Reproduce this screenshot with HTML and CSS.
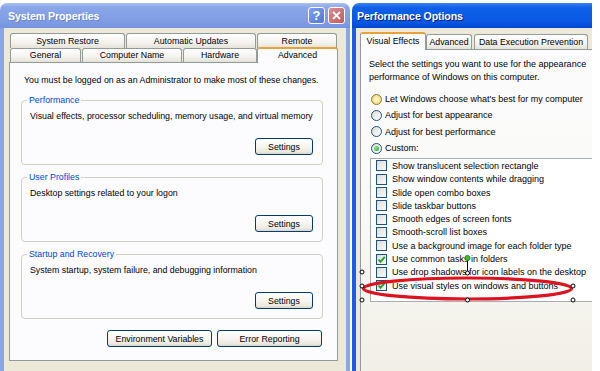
FILE: index.html
```html
<!DOCTYPE html>
<html lang="en">
<head>
    <meta charset="UTF-8">
    <title>System Properties / Performance Options</title>
    <link rel="stylesheet" href="styles.css">
</head>
<body>
    <div class="desktop">
        <!-- System Properties (inactive) -->
        <div class="window inactive sysprops">
            <div class="titlebar">
                <span class="title">System Properties</span>
                <div class="caption-buttons">
                    <span class="cbtn help">?</span>
                    <span class="cbtn close">
                        <svg width="9" height="9" viewBox="0 0 9 9"><path d="M1 1 L8 8 M8 1 L1 8" stroke="#fff" stroke-width="1.8" fill="none"/></svg>
                    </span>
                </div>
            </div>
            <div class="client">
                <div class="tab-row back">
                    <div class="tab t-restore">System Restore</div>
                    <div class="tab t-updates">Automatic Updates</div>
                    <div class="tab t-remote">Remote</div>
                </div>
                <div class="tab-row front">
                    <div class="tab t-general">General</div>
                    <div class="tab t-computer">Computer Name</div>
                    <div class="tab t-hardware">Hardware</div>
                    <div class="tab t-advanced selected">Advanced</div>
                </div>
                <div class="tab-panel">
                    <p class="notice">You must be logged on as an Administrator to make most of these changes.</p>

                    <fieldset class="group">
                        <legend>Performance</legend>
                        <p>Visual effects, processor scheduling, memory usage, and virtual memory</p>
                        <div class="group-actions"><button class="btn btn-settings">Settings</button></div>
                    </fieldset>

                    <fieldset class="group">
                        <legend>User Profiles</legend>
                        <p>Desktop settings related to your logon</p>
                        <div class="group-actions"><button class="btn btn-settings">Settings</button></div>
                    </fieldset>

                    <fieldset class="group">
                        <legend>Startup and Recovery</legend>
                        <p>System startup, system failure, and debugging information</p>
                        <div class="group-actions"><button class="btn btn-settings">Settings</button></div>
                    </fieldset>

                    <div class="panel-actions">
                        <button class="btn btn-wide">Environment Variables</button>
                        <button class="btn btn-wide">Error Reporting</button>
                    </div>
                </div>
            </div>
        </div>

        <!-- Performance Options (active) -->
        <div class="window active perfopts">
            <div class="titlebar">
                <span class="title">Performance Options</span>
            </div>
            <div class="client">
                <div class="tab-row">
                    <div class="tab t-visual selected">Visual Effects</div>
                    <div class="tab t-adv2">Advanced</div>
                    <div class="tab t-dep">Data Execution Prevention</div>
                </div>
                <div class="tab-panel fx-panel">
                    <p class="intro">Select the settings you want to use for the appearance<br>performance of Windows on this computer.</p>

                    <div class="radios">
                        <div class="radio-row"><span class="radio hover"></span>Let Windows choose what's best for my computer</div>
                        <div class="radio-row"><span class="radio"></span>Adjust for best appearance</div>
                        <div class="radio-row"><span class="radio"></span>Adjust for best performance</div>
                        <div class="radio-row"><span class="radio on"></span>Custom:</div>
                    </div>

                    <div class="listbox">
                        <div class="check-row"><span class="check"></span>Show translucent selection rectangle</div>
                        <div class="check-row"><span class="check"></span>Show window contents while dragging</div>
                        <div class="check-row"><span class="check"></span>Slide open combo boxes</div>
                        <div class="check-row"><span class="check"></span>Slide taskbar buttons</div>
                        <div class="check-row"><span class="check"></span>Smooth edges of screen fonts</div>
                        <div class="check-row"><span class="check"></span>Smooth-scroll list boxes</div>
                        <div class="check-row"><span class="check"></span>Use a background image for each folder type</div>
                        <div class="check-row"><span class="check on"><svg width="9" height="9" viewBox="0 0 9 9"><path d="M1.5 4.5 L3.5 6.8 L7.8 1.8" stroke="#21a121" stroke-width="1.8" fill="none"/></svg></span>Use common tasks in folders</div>
                        <div class="check-row"><span class="check"></span>Use drop shadows for icon labels on the desktop</div>
                        <div class="check-row"><span class="check on"><svg width="9" height="9" viewBox="0 0 9 9"><path d="M1.5 4.5 L3.5 6.8 L7.8 1.8" stroke="#21a121" stroke-width="1.8" fill="none"/></svg></span>Use visual styles on windows and buttons</div>
                    </div>
                </div>
            </div>
        </div>
    </div>

    <!-- red annotation drawn over the screenshot -->
    <svg class="annotation" width="600" height="371" viewBox="0 0 600 371">
        <ellipse cx="467.5" cy="288.5" rx="104" ry="10.5" fill="none" stroke="#dc1420" stroke-width="3.2"/>
        <line x1="467.5" y1="260" x2="467.5" y2="272" stroke="#000" stroke-width="1"/>
        <circle cx="467.5" cy="258" r="2.6" fill="#37c23a" stroke="#1a6a1a" stroke-width="0.8"/>
        <circle cx="362" cy="272" r="2" fill="#fff" stroke="#000" stroke-width="1"/>
        <circle cx="467.5" cy="273" r="2" fill="#fff" stroke="#000" stroke-width="1"/>
        <circle cx="362" cy="286" r="2" fill="#fff" stroke="#000" stroke-width="1"/>
        <circle cx="573" cy="286" r="2" fill="#fff" stroke="#000" stroke-width="1"/>
        <circle cx="362" cy="300" r="2" fill="#fff" stroke="#000" stroke-width="1"/>
        <circle cx="467.5" cy="300" r="2" fill="#fff" stroke="#000" stroke-width="1"/>
        <circle cx="573" cy="300" r="2" fill="#fff" stroke="#000" stroke-width="1"/>
    </svg>
</body>
</html>
```

FILE: styles.css
```css
body {
    margin: 0;
    width: 600px;
    height: 371px;
    overflow: hidden;
    position: relative;
    background: #fff;
    font-family: "Liberation Sans", Arial, sans-serif;
    font-size: 8.8px;
    color: #000;
}
p {
    margin: 0;
}

.desktop {
    display: flex;
    height: 371px;
    padding-top: 3px;
    box-sizing: border-box;
}

/* window chrome */
.window {
    display: flex;
    flex-direction: column;
}
.sysprops {
    width: 350px;
}
.perfopts {
    width: 240px;
    margin-left: 2px;
}
.titlebar {
    height: 25px;
    flex: 0 0 25px;
    display: flex;
    align-items: center;
    justify-content: space-between;
    padding: 0 5px 0 8px;
    border-radius: 7px 7px 0 0;
}
.inactive .titlebar {
    background: linear-gradient(#a9c0f0, #8aa6e8 18%, #7f9ce4 75%, #7592de);
}
.active .titlebar {
    padding-left: 5px;
    border-radius: 7px 0 0 0;
    background: linear-gradient(#3d83f4, #0f60e8 18%, #0a58e4 75%, #0448d4);
}
.title {
    color: #fff;
    font-weight: bold;
    font-size: 10.6px;
    letter-spacing: -0.1px;
}
.inactive .title {
    text-shadow: 1px 1px #6b84c9;
}
.active .title {
    text-shadow: 1px 1px #0a1e78;
}
.caption-buttons {
    display: flex;
    gap: 3px;
}
.cbtn {
    width: 17px;
    height: 17px;
    box-sizing: border-box;
    border: 1px solid #fff;
    border-radius: 3px;
    display: flex;
    align-items: center;
    justify-content: center;
    color: #fff;
    font-weight: bold;
    font-size: 13px;
}
.help {
    background: linear-gradient(135deg, #7ea2ec, #4d78dc);
}
.close {
    background: linear-gradient(135deg, #d68f90, #c0595e);
}

.client {
    flex: 1;
    background: #ece9d8;
    display: flex;
    flex-direction: column;
    overflow: hidden;
}
.sysprops .client {
    border-left: 4px solid #8aa5e8;
    border-right: 4px solid #8aa5e8;
    padding: 5px 8px 0 5px;
}
.perfopts .client {
    border-left: 4px solid #1a5ee6;
    padding: 4px 0 0 4px;
}

/* tabs */
.tab-row {
    display: flex;
    gap: 1px;
    padding-left: 1px;
    position: relative;
    z-index: 1;
}
.tab {
    flex: 0 0 auto;
    box-sizing: border-box;
    height: 15px;
    border: 1px solid #919b9c;
    border-bottom: none;
    border-radius: 3px 3px 0 0;
    background: linear-gradient(#fff, #f4f3ee 60%, #e4e2d8);
    text-align: center;
    line-height: 14px;
    white-space: nowrap;
}
.front .tab {
    height: 14px;
    line-height: 13px;
}
.tab.selected {
    background: #fcfcfe;
    border-top: 2px solid #e8a23a;
    height: 16px;
    margin-top: -1px;
    margin-bottom: -1px;
}
.front .tab.selected {
    height: 16px;
    line-height: 12px;
}
.t-restore { width: 115px; }
.t-updates { width: 130px; }
.t-remote { width: 80px; }
.t-general { width: 71px; }
.t-computer { width: 100px; }
.t-hardware { width: 74px; }
.t-advanced { width: 81px; margin-left: -1px; }

.perfopts .tab-row {
    gap: 0;
    padding-left: 0;
    align-items: flex-end;
}
.perfopts .tab {
    height: 15px;
    line-height: 14px;
}
.perfopts .tab.selected {
    height: 18px;
    line-height: 14px;
    margin-top: 0;
}
.t-visual { width: 66px; }
.t-adv2 { width: 46px; margin-right: 2px; }
.t-dep { width: 114px; }

.tab-panel {
    background: #fcfcfe;
    border: 1px solid #919b9c;
    box-sizing: border-box;
}

/* System Properties panel */
.sysprops .tab-panel {
    height: 299px;
    display: flex;
    flex-direction: column;
}
.notice {
    margin: 12px 0 8px 14px;
    line-height: 11px;
}
.group {
    margin: 0 14px 6px 11px;
    padding: 5px 9px 9px 8px;
    border: 1px solid #d0d0bf;
    border-radius: 4px;
    min-width: 0;
}
.group legend {
    color: #0046d5;
    padding: 0 2px;
    margin-left: -3px;
    line-height: 12px;
}
.group p {
    line-height: 11px;
}
.group-actions {
    display: flex;
    justify-content: flex-end;
    margin-top: 16px;
}
.btn {
    font-family: inherit;
    font-size: 8.8px;
    color: #000;
    height: 17px;
    padding: 0;
    border: 1px solid #003c74;
    border-radius: 3px;
    background: linear-gradient(#fff, #f6f5f0 50%, #ebe8df 85%, #d8d3c6);
}
.btn-settings {
    width: 58px;
}
.btn-wide {
    width: 105px;
}
.panel-actions {
    display: flex;
    justify-content: flex-end;
    gap: 5px;
    margin: 5px 15px 0 0;
}

/* Performance Options panel */
.fx-panel {
    flex: 1;
    margin-right: -3px;
    border-bottom: none;
    padding: 8px 0 0 8px;
    font-size: 9px;
    background: linear-gradient(#fcfcfe, #f8f8f4 55%, #f1efe6);
}
.intro {
    line-height: 13px;
    white-space: nowrap;
}
.radios {
    margin-top: 7px;
}
.radio-row {
    height: 16.3px;
    display: flex;
    align-items: center;
    white-space: nowrap;
}
.radio {
    width: 11px;
    height: 11px;
    box-sizing: border-box;
    border-radius: 50%;
    border: 1px solid #1c5180;
    background: linear-gradient(135deg, #dcdcd4, #fff);
    margin: 0 3px 0 2px;
    display: flex;
    align-items: center;
    justify-content: center;
}
.radio.hover {
    border-color: #8a7a3c;
    background: radial-gradient(circle, #fff6d0 20%, #f6d77a 70%, #e6b43c);
}
.radio.on::after {
    content: "";
    width: 5px;
    height: 5px;
    border-radius: 50%;
    background: radial-gradient(circle at 35% 35%, #8fe58f, #21a121);
}
.listbox {
    margin: 2px 0 0 1px;
    height: 144px;
    box-sizing: border-box;
    border: 1px solid #a5acb5;
    border-right: none;
    background: #fff;
    padding: 0 0 0 5px;
}
.check-row {
    height: 13.33px;
    display: flex;
    align-items: center;
    white-space: nowrap;
}
.check {
    width: 11px;
    height: 11px;
    box-sizing: border-box;
    border: 1px solid #1c5180;
    background: linear-gradient(135deg, #dcdcd6, #fbfbfa);
    margin-right: 5px;
    display: flex;
    align-items: center;
    justify-content: center;
}

.annotation {
    position: absolute;
    top: 0;
    left: 0;
    pointer-events: none;
}
```
